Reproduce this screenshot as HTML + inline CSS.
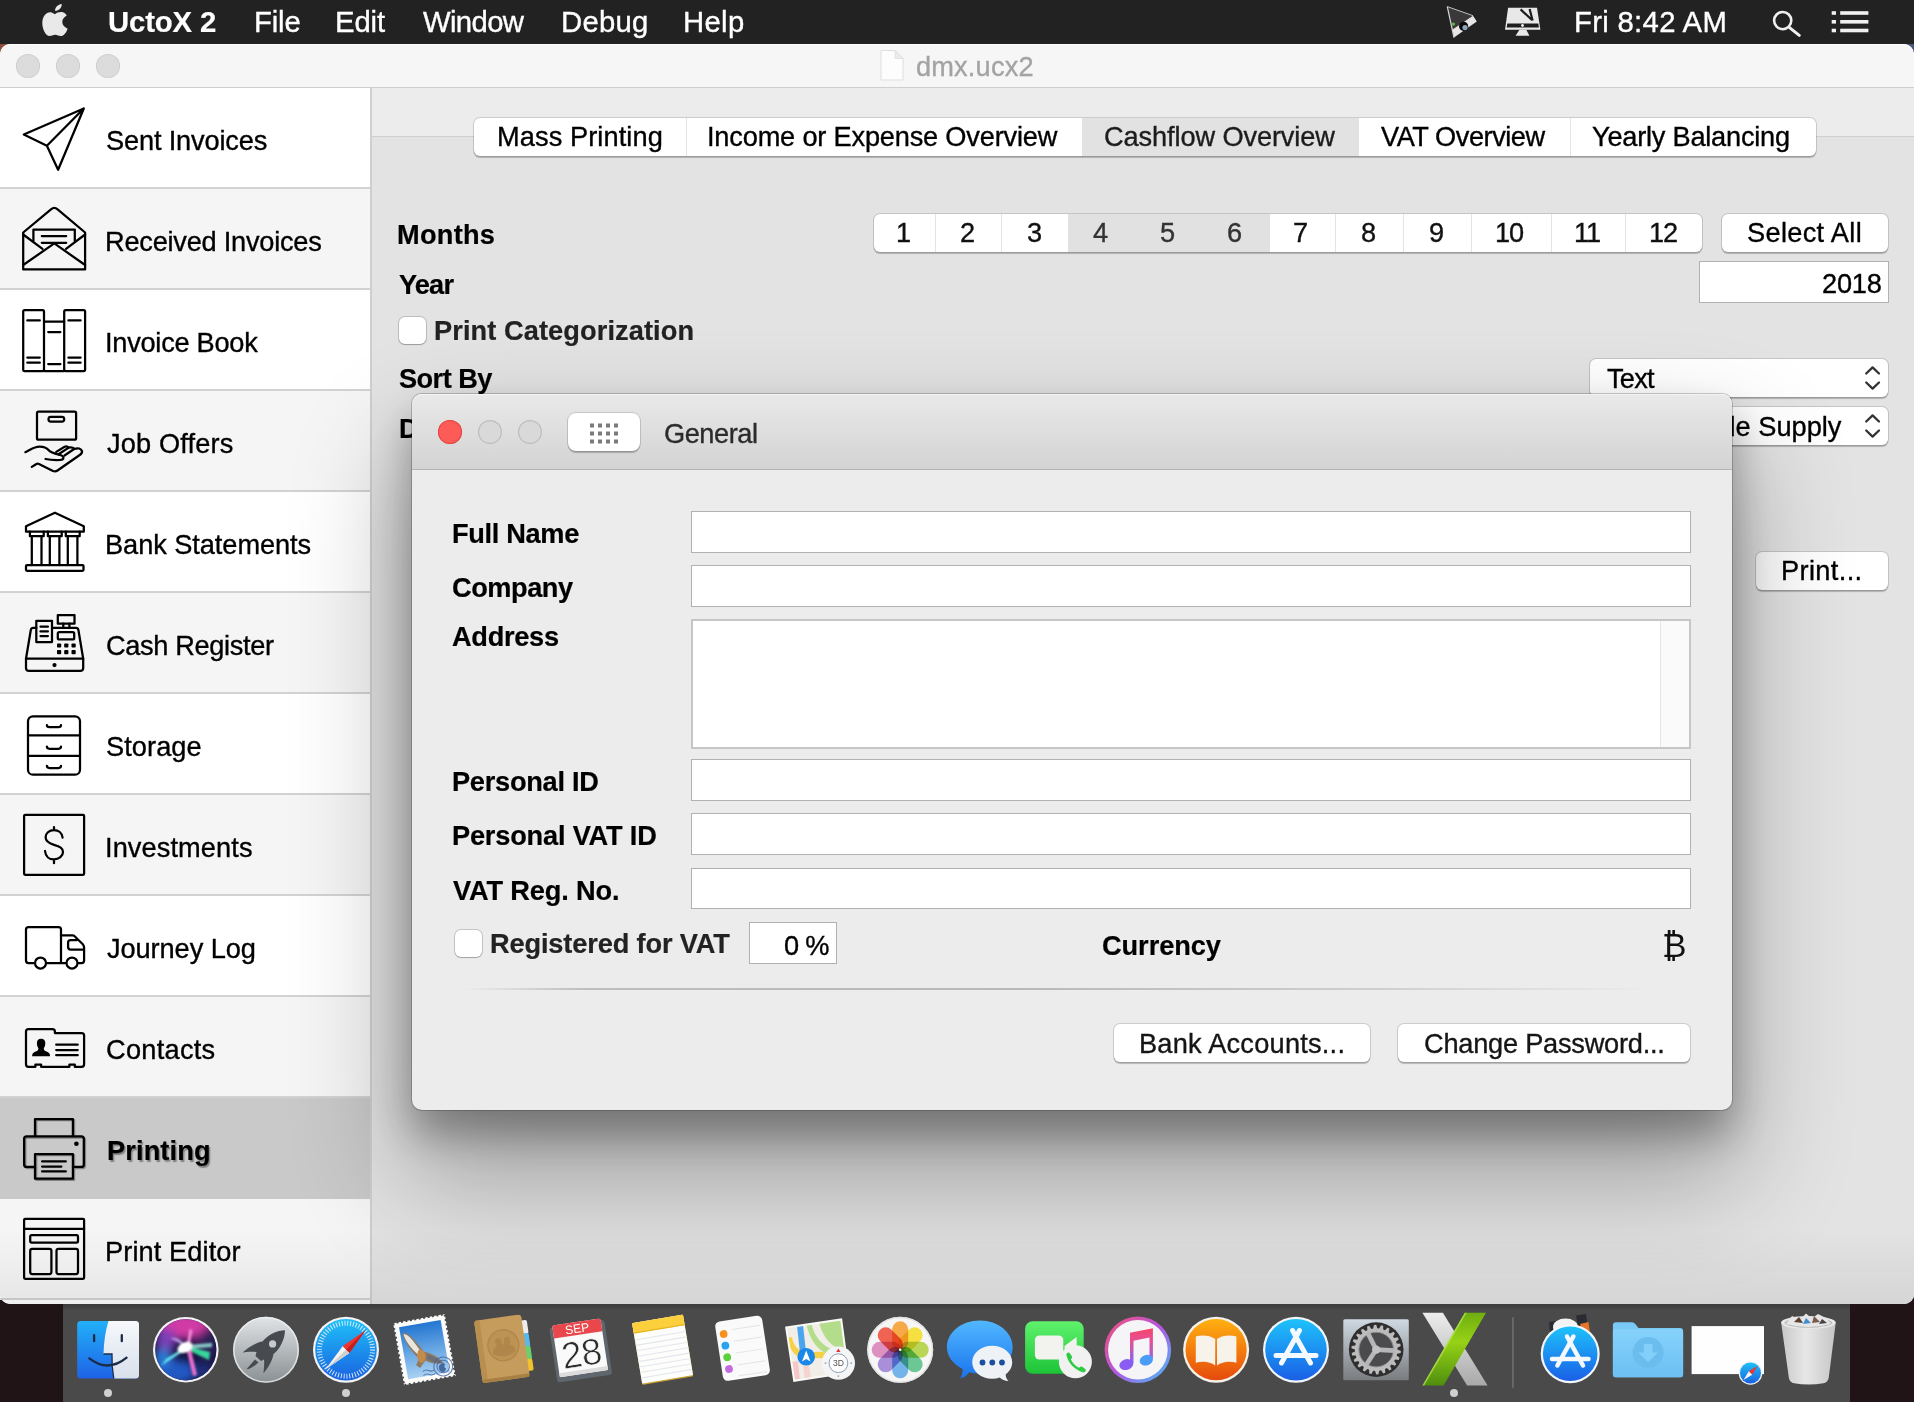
<!DOCTYPE html>
<html lang="en"><head><meta charset="utf-8"><title>UctoX 2</title>
<style>
html,body{margin:0;padding:0}
body{width:1914px;height:1402px;position:relative;overflow:hidden;background:#201416;font-family:"Liberation Sans",sans-serif}
.t{position:absolute;white-space:nowrap;line-height:1;font-family:"Liberation Sans",sans-serif;will-change:transform}
.abs{position:absolute}
#menubar{position:absolute;left:0;top:0;width:1914px;height:44px;background:#222}
#win{position:absolute;left:0;top:44px;width:1914px;height:1260px;background:#ececec;border-radius:10px 10px 10px 10px;overflow:hidden}
#titlebar{position:absolute;left:0;top:0;width:1914px;height:43px;background:#f6f6f6;border-bottom:1px solid #cfcfcf;box-shadow:inset 0 1px 0 #fff;border-radius:10px 10px 0 0}
.tl{position:absolute;width:24px;height:24px;border-radius:50%;background:#dcdcdc;box-shadow:inset 0 0 0 1px #d0d0d0}
#sidebar{position:absolute;left:0;top:44px;width:370px;height:1216px;background:#fff;border-right:2px solid #cfcfcf}
.row{position:absolute;left:0;width:370px;height:99px;border-bottom:2px solid #d2d2d2}
.row.alt{background:#f5f5f5}
.row.sel{background:#c9c9c9;border-bottom-color:#c9c9c9}
.row svg{position:absolute;left:0;top:0;width:100px;height:101px;overflow:visible}
.ic{fill:none;stroke:#000;stroke-width:2.250;stroke-linecap:round;stroke-linejoin:round}
#main{position:absolute;left:372px;top:44px;width:1542px;height:1216px;background:#ececec}
#tabbox{position:absolute;left:0;top:47.500px;width:1542px;height:1170px;background:#e3e3e3;border-top:1.500px solid #cfcfcf}
.seg{position:absolute;background:#fff;border-radius:6px;box-shadow:0 0 0 1px rgba(0,0,0,.13),0 1.5px 1px rgba(0,0,0,.22);overflow:hidden}
.seg i{position:absolute;top:0;bottom:0;width:1px;background:#e4e4e4}
.seg b{position:absolute;top:0;bottom:0;background:#e2e2e2}
.btn{position:absolute;background:#fff;border-radius:6px;box-shadow:0 0 0 1px rgba(0,0,0,.13),0 1.5px 1px rgba(0,0,0,.22)}
.field{position:absolute;background:#fff;box-shadow:inset 0 0 0 1px #b1b1b1}
.field.ta{box-shadow:inset 0 0 0 2px #c6c6c6}
.cb{position:absolute;width:27px;height:27px;border-radius:6px;background:#fff;box-shadow:0 0 0 1px rgba(0,0,0,.16),0 1px 1px rgba(0,0,0,.18)}
#dlg{position:absolute;left:412px;top:394px;width:1320px;height:716px;border-radius:10px;background:#ececec;box-shadow:0 0 0 1px rgba(0,0,0,.2),0 24px 40px 0 rgba(0,0,0,.30),0 60px 110px 10px rgba(0,0,0,.30)}
#dlgtitle{position:absolute;left:0;top:0;width:1320px;height:75px;border-radius:10px 10px 0 0;background:linear-gradient(#e9e9e9,#d3d3d3);border-bottom:1px solid #b4b4b4;box-shadow:inset 0 1px 0 #f4f4f4}
#dock{position:absolute;left:63px;top:1304px;width:1787px;height:98px;background:linear-gradient(#3b3b3b,#4a4a4a 7px)}
.dot{position:absolute;top:1389px;width:8px;height:8px;border-radius:50%;background:#d0d0d0}
</style>

</head><body>
<div class="abs" style="left:0;top:44px;width:14px;height:14px;background:#8e4a3c"></div><div class="abs" style="left:1900px;top:44px;width:14px;height:14px;background:#46557c"></div>
<div id="win"><div id="titlebar"></div>
<div class="tl" style="left:16px;top:10px"></div><div class="tl" style="left:56px;top:10px"></div><div class="tl" style="left:96px;top:10px"></div>
<svg class="abs" style="left:878px;top:4px" width="28" height="34" viewBox="878 48 28 34"><path d="M881,50.500 H895 L903,58.500 V80 H881 Z" fill="#fdfdfd" stroke="#dedede" stroke-width="1"/><path d="M895,50.500 V58.500 H903 Z" fill="#ececec" stroke="#dedede" stroke-width=".8"/></svg>
<div id="main"><div id="tabbox"></div></div>
<div id="sidebar"></div>
</div>
<div class="row" style="top:88px"><svg viewBox="0 0 100 101"><path class="ic" stroke-linejoin="miter" d="M23.8,46.5 L83.8,20.5 L58.1,81.8 L46.9,57.7 Z M46.9,57.7 L83.8,20.5"/></svg></div>
<div class="row alt" style="top:189px"><svg viewBox="0 0 100 101"><path class="ic" d="M23.2,80.4 V43.5 L51,20.3 Q54.3,17.6 57.6,20.3 L85.1,43.5 V80.4 Z"/>
<path class="ic" d="M23.2,76 L54.3,54.4 L85.1,76"/>
<path class="ic" d="M23.2,45.5 L42.5,59.8 M85.1,45.5 L66,59.8"/>
<path class="ic" d="M33.4,52 V40.6 H74.8 V52"/>
<path class="ic" d="M41.8,47 H66.2 M41.8,53.8 H66.2"/></svg></div>
<div class="row" style="top:290px"><svg viewBox="0 0 100 101"><rect class="ic" x="23.2" y="20.1" width="20.8" height="61" rx="1.5"/>
<rect class="ic" x="64.2" y="20.1" width="20.9" height="61" rx="1.5"/>
<path class="ic" d="M44,31.6 H64.2 M44,81.1 H64.2"/>
<path class="ic" d="M27.3,30.4 H39.8 M27.3,67.6 H39.8 M27.3,72.7 H39.8 M68.4,30.4 H80.6 M68.4,67.6 H80.6 M68.4,72.7 H80.6 M48.2,42 H60.4 M48.2,74 H60.4"/></svg></div>
<div class="row alt" style="top:391px"><svg viewBox="0 0 100 101"><rect class="ic" x="37" y="20.7" width="39.1" height="28" rx="1.5"/>
<rect class="ic" x="48.5" y="25.9" width="15.7" height="4.6" rx="2.3"/>
<path class="ic" d="M25.4,61.2 C31,58.5 34,55.7 39.5,55.6 C44,55.6 46.5,56.5 48.5,59 C51,62 56,63 60,64 C64.5,65 64.6,68.9 60,69 C54,69.2 50,69 45.6,68"/>
<path class="ic" d="M56.2,60.9 L64.6,55.8 Q67,54.8 68.8,56.6 L58.5,63.2 M68.8,56.6 Q72,55.6 74.5,57.8 L64.5,64.5 M74.5,58 C78,56.5 81,57.5 82,60 C82.5,62 81,63.3 79,64.5 L57.5,79.5 Q55.5,81 53,80 L39,73 Q37.5,72.3 36,73.2 L31.8,75.9"/></svg></div>
<div class="row" style="top:492px"><svg viewBox="0 0 100 101"><path class="ic" d="M54.9,20.7 L83.8,34.2 V39.7 H26 V34.2 Z"/>
<path class="ic" d="M29.9,39.7 V44.2 H43.7 V39.7 M47.9,39.7 V44.2 H61.7 V39.7 M65.8,39.7 V44.2 H79.7 V39.7"/>
<path class="ic" d="M31.8,44.2 V73 M41.5,44.2 V73 M49.8,44.2 V73 M59.4,44.2 V73 M67.8,44.2 V73 M77.4,44.2 V73"/>
<rect class="ic" x="26" y="73" width="57.5" height="5.8" rx="1"/></svg></div>
<div class="row alt" style="top:593px"><svg viewBox="0 0 100 101"><path class="ic" d="M36.3,34.9 H33.2 Q31.2,34.9 30.8,37 L26,65.7 V74.9 Q26,77.9 29,77.9 H80.2 Q83.2,77.9 83.2,74.9 V65.7 L78.4,37 Q78,34.9 76,34.9 H52"/>
<path class="ic" d="M26,65.7 H83.2"/>
<rect class="ic" x="36.3" y="27.8" width="15.7" height="21.2"/>
<path class="ic" d="M40.5,33.7 H47.9 M40.5,38.4 H47.9 M40.5,43 H47.9"/>
<rect class="ic" x="57.8" y="22" width="16.7" height="8.7"/>
<path class="ic" d="M63.3,30.7 V34.9 M69.4,30.7 V34.9"/>
<rect class="ic" x="57.8" y="39" width="16.4" height="7.4" rx="1.5"/>
<g fill="#000"><rect x="57" y="50.4" width="4.2" height="4.2" rx=".8"/><rect x="64.2" y="50.4" width="4.2" height="4.2" rx=".8"/><rect x="71.5" y="50.4" width="4.2" height="4.2" rx=".8"/><rect x="57" y="57.1" width="4.2" height="4.2" rx=".8"/><rect x="64.2" y="57.1" width="4.2" height="4.2" rx=".8"/><rect x="71.5" y="57.1" width="4.2" height="4.2" rx=".8"/><circle cx="54.5" cy="72.1" r="2.1"/></g></svg></div>
<div class="row" style="top:694px"><svg viewBox="0 0 100 101"><rect class="ic" x="28" y="22.3" width="52" height="58.4" rx="5"/>
<path class="ic" d="M28,41.3 H80 M28,61.8 H80"/>
<path class="ic" d="M46.9,31 Q46.9,33.2 49.5,33.2 H58.4 Q61,33.2 61,31 M46.9,52.6 Q46.9,54.8 49.5,54.8 H58.4 Q61,54.8 61,52.6 M46.9,71.8 Q46.9,74 49.5,74 H58.4 Q61,74 61,71.8"/></svg></div>
<div class="row alt" style="top:795px"><svg viewBox="0 0 100 101"><rect class="ic" x="24.1" y="19.9" width="60" height="59.9" rx="1"/>
<path class="ic" d="M62.6,42.6 C62,38 58.5,35.2 54,35.2 C49,35.2 45.6,38.3 45.6,42.2 C45.6,46 48,48 54,49.8 C60,51.5 63,53 63,57 C63,61 59,64.4 54,64.4 C49,64.4 45.5,61 45,56 M54,32 V35.2 M54,64.4 V68.2"/></svg></div>
<div class="row" style="top:896px"><svg viewBox="0 0 100 101"><path class="ic" d="M34,67 H28.5 Q26,67 26,64.5 V33.5 Q26,31 28.5,31 H58.5 Q61,31 61,33.5 V67 M47,67 H65.5"/>
<path class="ic" d="M61,39.3 H72.5 Q74.3,39.3 75.4,41 L82.8,48.2 Q84.1,50 84.1,52 V64.5 Q84.1,67 81.6,67 H78.5"/>
<path class="ic" d="M83.6,53.5 H70.6 Q68.1,53.5 68.1,51 V46.7 Q68.1,44.2 70.6,44.2 H76.8"/>
<circle class="ic" cx="40.5" cy="67" r="5.5"/><circle class="ic" cx="72" cy="67" r="5.5"/></svg></div>
<div class="row alt" style="top:997px"><svg viewBox="0 0 100 101"><path class="ic" d="M26,34.5 Q26,32 28.5,32 H52.4 Q54.9,32 54.9,34.5 V36.1 H81.6 Q84.1,36.1 84.1,38.6 V67.3 Q84.1,69.8 81.6,69.8 H74.8 V67.6 H69.4 V69.8 H41.1 V67.6 H35.4 V69.8 H28.5 Q26,69.8 26,67.3 Z"/>
<path d="M41.1,41.8 C44,41.8 45.3,43.6 45.3,46 C45.3,48.5 44.6,50 43.8,51.2 C43.8,53 44.5,53.8 46.5,54.6 C49,55.6 50.1,57 50.1,59.2 H32.1 C32.1,57 33.2,55.6 35.7,54.6 C37.7,53.8 38.4,53 38.4,51.2 C37.6,50 36.9,48.5 36.9,46 C36.9,43.6 38.2,41.8 41.1,41.8 Z" fill="#000"/>
<path class="ic" d="M56.2,47.7 H77.7 M56.2,53 H77.7 M56.2,58.2 H77.7"/></svg></div>
<div class="row sel" style="top:1098px"><svg viewBox="0 0 100 101"><g transform="translate(1.2,1.2)" opacity=".35"><path class="ic" stroke="#555" d="M35,38.4 V21 H72.9 V38.4 M35,68.9 H26.6 Q24.1,68.9 24.1,66.4 V40.9 Q24.1,38.4 26.6,38.4 H81.3 Q83.8,38.4 83.8,40.9 V66.4 Q83.8,68.9 81.3,68.9 H72.9"/><rect class="ic" stroke="#555" x="35" y="56" width="37.9" height="24.7"/></g>
<path class="ic" d="M35,38.4 V21 H72.9 V38.4 M35,68.9 H26.6 Q24.1,68.9 24.1,66.4 V40.9 Q24.1,38.4 26.6,38.4 H81.3 Q83.8,38.4 83.8,40.9 V66.4 Q83.8,68.9 81.3,68.9 H72.9"/>
<rect class="ic" x="35" y="56" width="37.9" height="24.7"/>
<path class="ic" d="M42.1,63.4 H65.8 M42.1,68.6 H61.4 M42.1,73.4 H65.8"/>
<circle cx="76.4" cy="45.8" r="2.3" fill="#000"/></svg></div>
<div class="row alt" style="top:1199px"><svg viewBox="0 0 100 101"><rect class="ic" x="24.1" y="19.9" width="60" height="59.9" rx="1"/>
<path class="ic" d="M24.1,29.8 H84.1"/>
<rect class="ic" x="30.2" y="36" width="47.8" height="7.5" rx="1.5"/>
<rect class="ic" x="30.2" y="49.9" width="21.2" height="25.1" rx="2"/>
<rect class="ic" x="56.5" y="49.9" width="21.5" height="25.1" rx="2"/></svg></div>
<span class="t" style="left:106.0px;top:127.0px;font-size:27.2px;font-weight:400;color:#000;letter-spacing:-0.16px;-webkit-text-stroke:0.35px #000;">Sent Invoices</span>
<span class="t" style="left:105.0px;top:228.0px;font-size:27.2px;font-weight:400;color:#000;letter-spacing:-0.24px;-webkit-text-stroke:0.35px #000;">Received Invoices</span>
<span class="t" style="left:105.0px;top:329.0px;font-size:27.2px;font-weight:400;color:#000;letter-spacing:-0.26px;-webkit-text-stroke:0.35px #000;">Invoice Book</span>
<span class="t" style="left:107.0px;top:430.0px;font-size:27.2px;font-weight:400;color:#000;letter-spacing:0.16px;-webkit-text-stroke:0.35px #000;">Job Offers</span>
<span class="t" style="left:105.0px;top:531.0px;font-size:27.2px;font-weight:400;color:#000;letter-spacing:-0.06px;-webkit-text-stroke:0.35px #000;">Bank Statements</span>
<span class="t" style="left:106.0px;top:632.0px;font-size:27.2px;font-weight:400;color:#000;letter-spacing:-0.35px;-webkit-text-stroke:0.35px #000;">Cash Register</span>
<span class="t" style="left:106.0px;top:733.0px;font-size:27.2px;font-weight:400;color:#000;letter-spacing:0.07px;-webkit-text-stroke:0.35px #000;">Storage</span>
<span class="t" style="left:105.0px;top:834.0px;font-size:27.2px;font-weight:400;color:#000;letter-spacing:0.09px;-webkit-text-stroke:0.35px #000;">Investments</span>
<span class="t" style="left:107.0px;top:935.0px;font-size:27.2px;font-weight:400;color:#000;letter-spacing:-0.08px;-webkit-text-stroke:0.35px #000;">Journey Log</span>
<span class="t" style="left:106.0px;top:1036.0px;font-size:27.2px;font-weight:400;color:#000;letter-spacing:0.27px;-webkit-text-stroke:0.35px #000;">Contacts</span>
<span class="t" style="left:107.0px;top:1137.0px;font-size:27.2px;font-weight:700;color:#000;letter-spacing:0.12px;-webkit-text-stroke:0.2px #000;text-shadow:1.5px 1.5px 1px rgba(0,0,0,.35);">Printing</span>
<span class="t" style="left:105.0px;top:1238.0px;font-size:27.2px;font-weight:400;color:#000;letter-spacing:0.10px;-webkit-text-stroke:0.35px #000;">Print Editor</span>
<div class="abs" style="left:0;top:1230px;width:1914px;height:74px;background:linear-gradient(rgba(0,0,0,0),rgba(0,0,0,.06));border-radius:0 0 10px 10px"></div>
<div id="menubar"></div>
<svg class="abs" style="left:0;top:0" width="1914" height="44" viewBox="0 0 1914 44">
<!-- apple -->
<path d="M55,14.200 C57,12.300 61,11.500 63.500,12.600 C64.900,13.200 66,14.300 66.700,15.500 C63.700,17.300 62.300,19.500 62.300,21.800 C62.300,24.800 64.100,27.200 67.600,28.700 C66.400,32.200 63.800,36.100 60.800,36.100 C58.500,36.100 57.500,34.800 55.200,34.800 C52.800,34.800 51.600,36.100 49.600,36.100 C46,36.100 42.300,29.500 42.300,23 C42.300,16.500 46,12.300 50.200,12.300 C52.500,12.300 53.800,14.200 55,14.200 Z" fill="#e9e9e9"/>
<path d="M55,10.800 C54.800,7.500 58,4.200 61.700,3.900 C62.100,7.200 59,10.900 55,10.800 Z" fill="#e9e9e9"/>
<!-- projector arrow icon -->
<path d="M1447.300,6.600 L1473,15.700 L1452.500,29.500 Z" fill="#3a3838"/>
<path d="M1452.500,29.500 L1473,15.700 L1476.800,21.500 L1454,37.600 Z" fill="#e6e6e6"/>
<path d="M1447.300,6.600 L1473,15.700" stroke="#bdbdbd" stroke-width="1" fill="none"/>
<path d="M1447.300,6.600 L1454,37.600" stroke="#d8d8d8" stroke-width="1.200" fill="none"/>
<circle cx="1463.600" cy="26.300" r="4.600" fill="#0c0c0c"/>
<circle cx="1465" cy="27.600" r="2.600" fill="#8ea4b8"/>
<circle cx="1453.400" cy="24.100" r="1.700" fill="#5fb84a"/>
<!-- monitor icon -->
<path d="M1508.100,7.800 H1537 L1540.400,29.800 H1505 Z" fill="#e8e8e8"/>
<path d="M1507.300,23.500 H1538.300 L1538.900,27.600 H1506.700 Z" fill="#1e1e1e"/>
<circle cx="1522.500" cy="25.500" r="1.400" fill="#f0f0f0"/>
<path d="M1519.400,29.800 H1526.300 L1529.400,35.700 H1515.600 Z" fill="#e8e8e8"/>
<path d="M1520.600,9.400 L1532,20 M1529.600,9 L1532.600,20.500" stroke="#1c1c1c" stroke-width="2.200" fill="none"/>
<!-- search -->
<circle cx="1782.700" cy="20.600" r="8.600" fill="none" stroke="#f0f0f0" stroke-width="2.600"/>
<path d="M1789.200,27.400 L1799.300,35.400" stroke="#f0f0f0" stroke-width="3" stroke-linecap="round"/>
<!-- list -->
<g fill="#f0f0f0"><rect x="1831.700" y="11.200" width="4.300" height="3.600"/><rect x="1840.200" y="11.200" width="28.200" height="3.600"/><rect x="1831.700" y="20" width="4.300" height="3.600"/><rect x="1840.200" y="20" width="28.200" height="3.600"/><rect x="1831.700" y="28.700" width="4.300" height="3.600"/><rect x="1840.200" y="28.700" width="28.200" height="3.600"/></g>
</svg>

<!-- tabs -->
<div class="seg" style="left:474px;top:118px;width:1342px;height:38px"><b style="left:608px;width:277px"></b><i style="left:212px"></i><i style="left:1096px"></i></div>
<!-- months -->
<div class="seg" style="left:874px;top:214px;width:828px;height:38px"><b style="left:194px;width:202px;background:#e1e1e1"></b><i style="left:61px"></i><i style="left:127px"></i><i style="left:461px"></i><i style="left:529px"></i><i style="left:597px"></i><i style="left:677px"></i><i style="left:751px"></i></div>
<div class="btn" style="left:1722px;top:214px;width:166px;height:38px"></div>
<div class="field" style="left:1699px;top:261px;width:190px;height:42px"></div>
<div class="cb" style="left:398.500px;top:316.500px"></div>
<div class="btn" style="left:1590px;top:359px;width:298px;height:38px"></div>
<div class="btn" style="left:1590px;top:407px;width:298px;height:38px"></div>
<svg class="abs" style="left:1860px;top:360px" width="26" height="90" viewBox="1860 360 26 90"><g fill="none" stroke="#333" stroke-width="2.300" stroke-linecap="round" stroke-linejoin="round"><path d="M1866.200,373.500 L1872.600,367.400 L1879,373.500 M1866.200,382.500 L1872.600,388.600 L1879,382.500"/><path d="M1866.200,421.500 L1872.600,415.400 L1879,421.500 M1866.200,430.500 L1872.600,436.600 L1879,430.500"/></g></svg>
<div class="btn" style="left:1756px;top:552px;width:132px;height:38px"></div>

<span class="t" style="left:108.0px;top:7.0px;font-size:29.3px;font-weight:700;color:#fff;letter-spacing:-0.13px;-webkit-text-stroke:0.2px #fff;">UctoX 2</span>
<span class="t" style="left:254.0px;top:7.0px;font-size:29.3px;font-weight:400;color:#fff;letter-spacing:-0.14px;-webkit-text-stroke:0.35px #fff;">File</span>
<span class="t" style="left:335.0px;top:7.0px;font-size:29.3px;font-weight:400;color:#fff;letter-spacing:-0.11px;-webkit-text-stroke:0.35px #fff;">Edit</span>
<span class="t" style="left:423.0px;top:7.0px;font-size:29.3px;font-weight:400;color:#fff;letter-spacing:-0.65px;-webkit-text-stroke:0.35px #fff;">Window</span>
<span class="t" style="left:561.0px;top:7.0px;font-size:29.3px;font-weight:400;color:#fff;letter-spacing:0.24px;-webkit-text-stroke:0.35px #fff;">Debug</span>
<span class="t" style="left:683.0px;top:7.0px;font-size:29.3px;font-weight:400;color:#fff;letter-spacing:0.31px;-webkit-text-stroke:0.35px #fff;">Help</span>
<span class="t" style="left:1574.0px;top:7.0px;font-size:29.3px;font-weight:400;color:#fff;letter-spacing:0.30px;-webkit-text-stroke:0.35px #fff;">Fri 8:42 AM</span>
<span class="t" style="left:916.0px;top:52.5px;font-size:27.2px;font-weight:400;color:#a3a3a3;letter-spacing:0.17px;-webkit-text-stroke:0.35px #a3a3a3;">dmx.ucx2</span>
<span class="t" style="left:497.0px;top:123.0px;font-size:27.2px;font-weight:400;color:#000;letter-spacing:0.09px;-webkit-text-stroke:0.35px #000;">Mass Printing</span>
<span class="t" style="left:707.0px;top:123.0px;font-size:27.2px;font-weight:400;color:#000;letter-spacing:-0.19px;-webkit-text-stroke:0.35px #000;">Income or Expense Overview</span>
<span class="t" style="left:1104.0px;top:123.0px;font-size:27.2px;font-weight:400;color:#1c1c1c;letter-spacing:-0.11px;-webkit-text-stroke:0.35px #1c1c1c;">Cashflow Overview</span>
<span class="t" style="left:1381.0px;top:123.0px;font-size:27.2px;font-weight:400;color:#000;letter-spacing:-0.46px;-webkit-text-stroke:0.35px #000;">VAT Overview</span>
<span class="t" style="left:1592.0px;top:123.0px;font-size:27.2px;font-weight:400;color:#000;letter-spacing:-0.23px;-webkit-text-stroke:0.35px #000;">Yearly Balancing</span>
<span class="t" style="left:397.0px;top:221.0px;font-size:27.2px;font-weight:700;color:#000;letter-spacing:0.26px;-webkit-text-stroke:0.2px #000;">Months</span>
<span class="t" style="left:399.0px;top:271.0px;font-size:27.2px;font-weight:700;color:#000;letter-spacing:-0.82px;-webkit-text-stroke:0.2px #000;">Year</span>
<span class="t" style="left:434.0px;top:316.5px;font-size:27.2px;font-weight:700;color:#222;letter-spacing:0.09px;-webkit-text-stroke:0.2px #222;">Print Categorization</span>
<span class="t" style="left:399.0px;top:364.5px;font-size:27.2px;font-weight:700;color:#000;letter-spacing:-0.56px;-webkit-text-stroke:0.2px #000;">Sort By</span>
<span class="t" style="left:399.0px;top:414.5px;font-size:27.2px;font-weight:700;color:#000;letter-spacing:0.00px;-webkit-text-stroke:0.2px #000;">Date</span>
<span class="t" style="left:896.0px;top:219.0px;font-size:27.2px;font-weight:400;color:#111;letter-spacing:0.00px;-webkit-text-stroke:0.35px #111;">1</span>
<span class="t" style="left:960.0px;top:219.0px;font-size:27.2px;font-weight:400;color:#111;letter-spacing:0.00px;-webkit-text-stroke:0.35px #111;">2</span>
<span class="t" style="left:1027.0px;top:219.0px;font-size:27.2px;font-weight:400;color:#111;letter-spacing:0.00px;-webkit-text-stroke:0.35px #111;">3</span>
<span class="t" style="left:1093.0px;top:219.0px;font-size:27.2px;font-weight:400;color:#333;letter-spacing:0.00px;-webkit-text-stroke:0.35px #333;">4</span>
<span class="t" style="left:1160.0px;top:219.0px;font-size:27.2px;font-weight:400;color:#333;letter-spacing:0.00px;-webkit-text-stroke:0.35px #333;">5</span>
<span class="t" style="left:1227.0px;top:219.0px;font-size:27.2px;font-weight:400;color:#333;letter-spacing:0.00px;-webkit-text-stroke:0.35px #333;">6</span>
<span class="t" style="left:1293.0px;top:219.0px;font-size:27.2px;font-weight:400;color:#111;letter-spacing:0.00px;-webkit-text-stroke:0.35px #111;">7</span>
<span class="t" style="left:1361.0px;top:219.0px;font-size:27.2px;font-weight:400;color:#111;letter-spacing:0.00px;-webkit-text-stroke:0.35px #111;">8</span>
<span class="t" style="left:1429.0px;top:219.0px;font-size:27.2px;font-weight:400;color:#111;letter-spacing:0.00px;-webkit-text-stroke:0.35px #111;">9</span>
<span class="t" style="left:1495.0px;top:219.0px;font-size:27.2px;font-weight:400;color:#111;letter-spacing:-1.20px;-webkit-text-stroke:0.35px #111;">10</span>
<span class="t" style="left:1574.0px;top:219.0px;font-size:27.2px;font-weight:400;color:#111;letter-spacing:-1.20px;-webkit-text-stroke:0.35px #111;">11</span>
<span class="t" style="left:1649.0px;top:219.0px;font-size:27.2px;font-weight:400;color:#111;letter-spacing:-1.20px;-webkit-text-stroke:0.35px #111;">12</span>
<span class="t" style="left:1747.0px;top:219.0px;font-size:27.2px;font-weight:400;color:#000;letter-spacing:0.32px;-webkit-text-stroke:0.35px #000;">Select All</span>
<span class="t" style="left:1822.0px;top:270.0px;font-size:27.2px;font-weight:400;color:#000;letter-spacing:-0.19px;-webkit-text-stroke:0.35px #000;">2018</span>
<span class="t" style="left:1607.0px;top:364.5px;font-size:27.2px;font-weight:400;color:#000;letter-spacing:-0.77px;-webkit-text-stroke:0.35px #000;">Text</span>
<span class="t" style="left:1657.0px;top:413.0px;font-size:27.2px;font-weight:400;color:#000;letter-spacing:0.00px;-webkit-text-stroke:0.35px #000;">Taxable Supply</span>
<span class="t" style="left:1781.0px;top:557.0px;font-size:27.2px;font-weight:400;color:#000;letter-spacing:0.37px;-webkit-text-stroke:0.35px #000;">Print...</span>
<div id="dlg"><div id="dlgtitle"></div>
<div class="abs" style="left:26px;top:26px;width:24px;height:24px;border-radius:50%;background:#fc5b57;box-shadow:inset 0 0 0 1px #e2463f"></div>
<div class="abs" style="left:66px;top:26px;width:24px;height:24px;border-radius:50%;background:#d9d9d9;box-shadow:inset 0 0 0 1.2px #bdbdbd"></div>
<div class="abs" style="left:106px;top:26px;width:24px;height:24px;border-radius:50%;background:#d9d9d9;box-shadow:inset 0 0 0 1.2px #bdbdbd"></div>
<div class="btn" style="left:156px;top:19px;width:72px;height:38px;border-radius:8px"></div>
<svg class="abs" style="left:178px;top:29px" width="30" height="22" viewBox="0 0 30 22"><g fill="#7b7b7b"><rect x="0" y="0.500" width="4" height="4"/><rect x="8" y="0.500" width="4" height="4"/><rect x="16" y="0.500" width="4" height="4"/><rect x="24" y="0.500" width="4" height="4"/><rect x="0" y="8.500" width="4" height="4"/><rect x="8" y="8.500" width="4" height="4"/><rect x="16" y="8.500" width="4" height="4"/><rect x="24" y="8.500" width="4" height="4"/><rect x="0" y="16.500" width="4" height="4"/><rect x="8" y="16.500" width="4" height="4"/><rect x="16" y="16.500" width="4" height="4"/><rect x="24" y="16.500" width="4" height="4"/></g></svg>
<div class="field" style="left:279px;top:117px;width:1000px;height:42px"></div>
<div class="field" style="left:279px;top:171px;width:1000px;height:42px"></div>
<div class="field ta" style="left:279px;top:225px;width:1000px;height:130px"></div>
<div class="abs" style="left:1248px;top:227px;width:28px;height:126px;background:#fafafa;border-left:1px solid #e6e6e6"></div>
<div class="field" style="left:279px;top:365px;width:1000px;height:42px"></div>
<div class="field" style="left:279px;top:419px;width:1000px;height:42px"></div>
<div class="field" style="left:279px;top:473.500px;width:1000px;height:41px"></div>
<div class="cb" style="left:42.500px;top:535.500px"></div>
<div class="field" style="left:337px;top:528px;width:88px;height:42px"></div>
<div class="abs" style="left:52px;top:594px;width:1230px;height:2px;background:linear-gradient(90deg,rgba(0,0,0,0),rgba(0,0,0,.2) 10%,rgba(0,0,0,.22) 45%,rgba(0,0,0,.12) 75%,rgba(0,0,0,0) 97%)"></div>
<div class="btn" style="left:702px;top:630px;width:256px;height:38px"></div>
<div class="btn" style="left:986px;top:630px;width:292px;height:38px"></div>
<div style="position:absolute;left:-412px;top:-394px;width:0;height:0">

<span class="t" style="left:664.0px;top:420.0px;font-size:27.2px;font-weight:400;color:#2b2b2b;letter-spacing:-0.46px;-webkit-text-stroke:0.35px #2b2b2b;">General</span>
<span class="t" style="left:452.0px;top:519.5px;font-size:27.2px;font-weight:700;color:#000;letter-spacing:-0.33px;-webkit-text-stroke:0.2px #000;">Full Name</span>
<span class="t" style="left:452.0px;top:573.5px;font-size:27.2px;font-weight:700;color:#000;letter-spacing:-0.46px;-webkit-text-stroke:0.2px #000;">Company</span>
<span class="t" style="left:452.0px;top:623.0px;font-size:27.2px;font-weight:700;color:#000;letter-spacing:-0.29px;-webkit-text-stroke:0.2px #000;">Address</span>
<span class="t" style="left:452.0px;top:767.5px;font-size:27.2px;font-weight:700;color:#000;letter-spacing:-0.26px;-webkit-text-stroke:0.2px #000;">Personal ID</span>
<span class="t" style="left:452.0px;top:821.5px;font-size:27.2px;font-weight:700;color:#000;letter-spacing:-0.19px;-webkit-text-stroke:0.2px #000;">Personal VAT ID</span>
<span class="t" style="left:453.0px;top:876.5px;font-size:27.2px;font-weight:700;color:#000;letter-spacing:-0.15px;-webkit-text-stroke:0.2px #000;">VAT Reg. No.</span>
<span class="t" style="left:490.0px;top:930.0px;font-size:27.2px;font-weight:700;color:#222;letter-spacing:-0.14px;-webkit-text-stroke:0.2px #222;">Registered for VAT</span>
<span class="t" style="left:784.0px;top:932.0px;font-size:27.2px;font-weight:400;color:#000;letter-spacing:-0.69px;-webkit-text-stroke:0.35px #000;">0 %</span>
<span class="t" style="left:1102.0px;top:931.5px;font-size:27.2px;font-weight:700;color:#000;letter-spacing:-0.06px;-webkit-text-stroke:0.2px #000;">Currency</span>
<span class="t" style="left:1662.0px;top:928.5px;font-size:33px;font-weight:400;color:#111;letter-spacing:0.00px;-webkit-text-stroke:0.35px #111;-webkit-text-stroke:0;">₿</span>
<span class="t" style="left:1139.0px;top:1029.5px;font-size:27.2px;font-weight:400;color:#151515;letter-spacing:0.23px;-webkit-text-stroke:0.35px #151515;">Bank Accounts...</span>
<span class="t" style="left:1424.0px;top:1029.5px;font-size:27.2px;font-weight:400;color:#151515;letter-spacing:-0.23px;-webkit-text-stroke:0.35px #151515;">Change Password...</span>
</div></div>

<div id="dock"></div>
<div class="dot" style="left:104px"></div><div class="dot" style="left:342px"></div><div class="dot" style="left:1450.200px"></div>

<svg class="abs" style="left:0;top:1300px;will-change:transform" width="1914" height="102" viewBox="0 1300 1914 102">
<defs>
<linearGradient id="gFinderL" x1="0" y1="0" x2="0" y2="1"><stop offset="0" stop-color="#21b0f8"/><stop offset="1" stop-color="#1f62e6"/></linearGradient>
<linearGradient id="gFinderR" x1="0" y1="0" x2="0" y2="1"><stop offset="0" stop-color="#f6f8fb"/><stop offset="1" stop-color="#d8e0ec"/></linearGradient>
<radialGradient id="gSiri" cx=".5" cy=".5" r=".5"><stop offset="0" stop-color="#1b2a6e"/><stop offset=".7" stop-color="#141a4c"/><stop offset="1" stop-color="#0a0a2a"/></radialGradient>
<linearGradient id="gLaunch" x1="0" y1="0" x2="0" y2="1"><stop offset="0" stop-color="#e1e4e6"/><stop offset="1" stop-color="#8a9093"/></linearGradient>
<linearGradient id="gSafari" x1="0" y1="0" x2="0" y2="1"><stop offset="0" stop-color="#1ec0f8"/><stop offset="1" stop-color="#1a62e0"/></linearGradient>
<linearGradient id="gSky" x1="0" y1="0" x2="0" y2="1"><stop offset="0" stop-color="#2276d2"/><stop offset="1" stop-color="#a9d2f2"/></linearGradient>
<linearGradient id="gMsg" x1="0" y1="0" x2="0" y2="1"><stop offset="0" stop-color="#52b8ff"/><stop offset="1" stop-color="#1a74ee"/></linearGradient>
<linearGradient id="gFT" x1="0" y1="0" x2="0" y2="1"><stop offset="0" stop-color="#5ff26c"/><stop offset="1" stop-color="#1dc437"/></linearGradient>
<linearGradient id="gITring" x1="0" y1="0" x2="1" y2="1"><stop offset="0" stop-color="#f5506e"/><stop offset=".5" stop-color="#b556e2"/><stop offset="1" stop-color="#3cc4fa"/></linearGradient>
<linearGradient id="gNote" x1="0" y1="0" x2="0" y2="1"><stop offset="0" stop-color="#f7466a"/><stop offset=".4" stop-color="#e2509a"/><stop offset="1" stop-color="#7a6cf0"/></linearGradient>
<linearGradient id="gBooks" x1="0" y1="0" x2="0" y2="1"><stop offset="0" stop-color="#ffb010"/><stop offset="1" stop-color="#e64a0c"/></linearGradient>
<linearGradient id="gAS" x1="0" y1="0" x2="0" y2="1"><stop offset="0" stop-color="#1ec2fb"/><stop offset="1" stop-color="#1a5fe6"/></linearGradient>
<linearGradient id="gSP" x1="0" y1="0" x2="0" y2="1"><stop offset="0" stop-color="#cfd9e2"/><stop offset="1" stop-color="#797c7f"/></linearGradient>
<linearGradient id="gXg" x1="0" y1="0" x2="0" y2="1"><stop offset="0" stop-color="#ededed"/><stop offset="1" stop-color="#a9a9a9"/></linearGradient>
<linearGradient id="gXv" x1="0" y1="0" x2="0" y2="1"><stop offset="0" stop-color="#6fae10"/><stop offset=".4" stop-color="#96d216"/><stop offset="1" stop-color="#4f8f0e"/></linearGradient>
<linearGradient id="gFold" x1="0" y1="0" x2="0" y2="1"><stop offset="0" stop-color="#86d2fc"/><stop offset="1" stop-color="#6cbff2"/></linearGradient>
<linearGradient id="gTrash" x1="0" y1="0" x2="1" y2="0"><stop offset="0" stop-color="#d2d2d2"/><stop offset=".45" stop-color="#f3f3f3"/><stop offset="1" stop-color="#cfcfcf"/></linearGradient>
<clipPath id="cSiri"><circle cx="185.8" cy="1349.8" r="30.6"/></clipPath><filter id="fB4" x="-50%" y="-50%" width="200%" height="200%"><feGaussianBlur stdDeviation="4"/></filter><filter id="fB2" x="-50%" y="-50%" width="200%" height="200%"><feGaussianBlur stdDeviation="1.3"/></filter><filter id="fB1" x="-50%" y="-50%" width="200%" height="200%"><feGaussianBlur stdDeviation=".8"/></filter>
<clipPath id="cMaps"><path d="M786.2,1327.5 L841.2,1319.5 L848.3,1372.5 L794.2,1380.8 Z"/></clipPath>
</defs>
<!-- Finder -->
<rect x="77.2" y="1321" width="61.8" height="57.5" rx="3.5" fill="url(#gFinderL)"/>
<path d="M108.5,1321 H135.5 Q139,1321 139,1324.5 V1375 Q139,1378.5 135.5,1378.5 H113.8 Q111.5,1366 112,1354 H103.5 Q104,1335 108.5,1321 Z" fill="url(#gFinderR)"/>
<path d="M94.1,1335.2 V1341.2 M121.8,1335.2 V1341.2" stroke="#1c2b45" stroke-width="2.3" stroke-linecap="round"/>
<path d="M89.3,1358.4 Q108,1373 126.6,1357.7" fill="none" stroke="#1c2b45" stroke-width="2.3" stroke-linecap="round"/>
<path d="M103.5,1354 H112 Q111.5,1366 113.8,1378.5" fill="none" stroke="#1c2b45" stroke-width="1.300"/>
<!-- Siri -->
<circle cx="185.8" cy="1349.8" r="32.8" fill="#f4f2f6"/>
<circle cx="185.8" cy="1349.8" r="30.6" fill="#15123c"/>
<g clip-path="url(#cSiri)">
<g filter="url(#fB4)">
<ellipse cx="184" cy="1326" rx="27" ry="13" fill="#d23aa6"/>
<ellipse cx="166" cy="1340" rx="10" ry="12" fill="#7a3fb8"/>
<ellipse cx="175" cy="1372" rx="22" ry="12" fill="#2458c4"/>
<ellipse cx="163" cy="1358" rx="9" ry="10" fill="#2a7ad6"/>
<ellipse cx="207" cy="1345" rx="10" ry="16" fill="#2a2358"/>
<ellipse cx="203" cy="1372" rx="12" ry="9" fill="#1d2f78"/>
</g>
<g filter="url(#fB2)">
<path d="M184.4,1347.800 L161,1366 L166,1359 Z" fill="#5ff0f0"/>
<path d="M186,1346 L162.500,1364.500 L185,1350 Z" fill="#7ffcff"/>
<path d="M186,1346 L210,1352 L209,1360 L188,1350 Z" fill="#35d69a"/>
<path d="M186,1345 L212,1343 L212,1347 L187,1349 Z" fill="#9ff0e0" opacity=".8"/>
<path d="M186,1347 L193,1376 L197,1375 L190,1346 Z" fill="#f070d0"/>
<path d="M186,1349 L189.500,1329 L192.500,1330 L189,1349 Z" fill="#f78ad8"/>
<path d="M170,1338 Q180,1336 186,1347 Q178,1342 170,1338 Z" fill="#c9b6ff" opacity=".8"/>
<ellipse cx="185" cy="1347.500" rx="8" ry="5" fill="#fff" transform="rotate(-25 185 1347.500)"/>
</g>
<ellipse cx="184.800" cy="1347.600" rx="4" ry="3" fill="#fff" filter="url(#fB1)"/>
</g>
<!-- Launchpad -->
<circle cx="266" cy="1349.800" r="33" fill="url(#gLaunch)"/>
<circle cx="266" cy="1349.800" r="32.200" fill="none" stroke="#f2f4f5" stroke-opacity=".75" stroke-width="1.500"/>
<path d="M285,1330.200 C277,1330.500 268.500,1334 262.500,1341.500 C258,1342 250,1346 242.500,1352.500 C247,1351.500 253,1351.500 256.500,1352 L255.500,1356 L261,1361 L264,1359.500 C264.500,1363 264,1369 263.400,1373.300 C269,1367 272.500,1360 273.500,1354 C281,1348 284.800,1338 285,1330.200 Z" fill="#474b50"/>
<path d="M255,1359.500 L246.500,1369.300 C250,1369 254,1366.500 258.500,1362.500 Z" fill="#474b50"/>
<circle cx="272.600" cy="1343.900" r="3.600" fill="#c6cace"/>
<!-- Safari -->
<circle cx="346" cy="1349.7" r="33" fill="#f3f3f5"/>
<circle cx="346" cy="1349.7" r="30.8" fill="url(#gSafari)"/>
<circle cx="346" cy="1349.7" r="26.5" fill="none" stroke="#e8f4ff" stroke-width="5" stroke-dasharray="1 1.85" opacity=".9"/>
<path d="M365.6,1330.2 L342.6,1346.3 L349.4,1353.1 Z" fill="#f0352f"/>
<path d="M325.6,1369.3 L342.6,1346.3 L349.4,1353.1 Z" fill="#f4f4f4"/>
<path d="M365.6,1330.2 L349.4,1353.1 L346,1349.7 Z" fill="#c41f20"/>
<path d="M325.6,1369.3 L349.4,1353.1 L346,1349.7 Z" fill="#cfcfd2"/>
<!-- Mail -->
<g transform="rotate(-10 424.400 1349.600)">
<rect x="398.200" y="1318.100" width="52.400" height="63" fill="#fbfbf9"/>
<rect x="398.200" y="1318.100" width="52.400" height="63" fill="none" stroke="#4a4a4a" stroke-width="2.600" stroke-dasharray="1.900 2.600" stroke-dashoffset="1"/>
<rect x="399.500" y="1319.400" width="49.800" height="60.400" fill="#fbfbf9"/>
<rect x="403.300" y="1323.200" width="42.200" height="52.800" fill="url(#gSky)"/>
<path d="M405.500,1330 C409,1328.500 413,1333 416.500,1339 C419.500,1344 421.500,1348 423.500,1351.500 C430,1353.500 436.500,1358.500 441.500,1366.500 C435,1366.500 428.500,1364.500 423.500,1360.500 C421.500,1362.500 419.500,1364.500 417,1367 L413.500,1363.500 L417.500,1357.500 C411.500,1350 406.500,1340 405.500,1330 Z" fill="#8f7a62"/>
<path d="M406.500,1331 C409.500,1331 412.500,1335 415.500,1340.500 C417.500,1344.500 419,1347.500 420.500,1350.500 L417.500,1353.500 C412,1346.500 407.500,1339 406.500,1331 Z" fill="#e9e6e0"/>
<path d="M418,1349.500 C420.500,1348 423.500,1350 424.500,1353.500 C425.500,1357.500 422.500,1361.500 419.500,1362.500 C416.500,1361.500 415.500,1357.500 416.500,1353.500 Z" fill="#c48a4a"/>
<path d="M426,1354.500 C431.500,1357 436.500,1361 439.500,1365.500 C434.500,1365 429.500,1363 425.500,1359.500 Z" fill="#6d6f78"/>
<g fill="none" stroke="#3d5f9c" stroke-width="1.100" opacity=".75"><circle cx="440" cy="1369.500" r="9.500"/><circle cx="440" cy="1369.500" r="6.300"/><path d="M419,1371 q3,-2 6,0 t6,0 M419,1375 q3,-2 6,0 t6,0"/></g>
<path d="M437.500,1367 c1.500,-1.400 4,-1 4.800,.8 c-1.600,1 -1.600,3.200 .3,4 c-.8,2.200 -2.200,3.400 -3.400,3.400 c-1.500,0 -3.800,-2.200 -3.800,-4.800 c0,-1.700 .9,-3 2.100,-3.400 Z" fill="#35588f" opacity=".85"/>
</g>
<!-- Contacts -->
<g transform="rotate(-8 501.900 1348.800)">
<rect x="522" y="1323.500" width="8.500" height="14" rx="1.800" fill="#ececec"/>
<rect x="522" y="1336.500" width="8.500" height="14" rx="1.800" fill="#5cb8ea"/>
<rect x="522" y="1349.500" width="8.500" height="14" rx="1.800" fill="#6bcf6c"/>
<rect x="522" y="1362.500" width="8.500" height="12" rx="1.800" fill="#f2c12e"/>
<rect x="478.200" y="1317.300" width="47.400" height="63" rx="3" fill="#c69c5c"/>
<rect x="478.200" y="1317.300" width="5.500" height="63" rx="2.500" fill="#b98f50"/>
<rect x="478.200" y="1376.800" width="47.400" height="3.500" rx="1.700" fill="#a98043"/>
<circle cx="503.800" cy="1345.500" r="15.500" fill="#bd9253" stroke="#b0864a" stroke-width="1.300"/>
<path d="M492.500,1353 C492.500,1348.500 494.500,1346.500 497.500,1345.500 C495.500,1342.500 495.500,1337.500 499.300,1337.500 C502.200,1337.500 503,1340.500 502.300,1343.500 L503.800,1345 L505.300,1343.500 C504.600,1340.500 505.400,1337.500 508.300,1337.500 C512.100,1337.500 512.100,1342.500 510.100,1345.500 C513.100,1346.500 515.100,1348.500 515.100,1353 C508,1357.500 499.500,1357.500 492.500,1353 Z" fill="#b0864a"/>
</g>
<!-- Calendar -->
<g transform="rotate(-8.500 580.100 1347.800)">
<rect x="552.500" y="1323.500" width="55.500" height="55.500" rx="3" fill="#5f666e"/>
<rect x="555.700" y="1321.700" width="48.800" height="52.200" rx="2" fill="#fafafa"/>
<rect x="555.700" y="1369.900" width="48.800" height="4" fill="#dcdcdc"/>
<path d="M555.700,1323.700 Q555.700,1321.700 557.700,1321.700 H602.500 Q604.500,1321.700 604.500,1323.700 V1334.800 H555.700 Z" fill="#e9474b"/>
<text x="580.100" y="1332.600" font-family="Liberation Sans, sans-serif" font-size="12.200" fill="#fff" text-anchor="middle">SEP</text>
<text x="580.600" y="1366.300" font-family="Liberation Sans, sans-serif" font-size="37" fill="#2c2c2c" stroke="#fafafa" stroke-width=".7" text-anchor="middle" letter-spacing="-.5">28</text>
</g>
<!-- Notes -->
<g transform="rotate(-9.500 662.600 1349.300)">
<rect x="636.800" y="1318.500" width="51.600" height="62.500" rx="1" fill="#c9a030"/>
<rect x="636.800" y="1318.500" width="51.600" height="61.300" rx="1" fill="#fdfdfb"/>
<rect x="636.800" y="1318.500" width="51.600" height="10.500" rx="1" fill="#fbd03c"/>
<rect x="636.800" y="1328" width="51.600" height="1.300" fill="#e8b624"/>
<path d="M636.800,1335.500 H688.400 M636.800,1341 H688.400 M636.800,1346.500 H688.400 M636.800,1352 H688.400 M636.800,1357.500 H688.400 M636.800,1363 H688.400 M636.800,1368.500 H688.400 M636.800,1374 H688.400" stroke="#e3e6ec" stroke-width="1.100"/>
</g>
<!-- Reminders -->
<g transform="rotate(-8.700 742.600 1348.300)">
<rect x="718.800" y="1318.200" width="47.500" height="60.100" rx="5" fill="#fafafa"/>
<path d="M735,1328 H763 M735,1340 H763 M735,1352 H763 M735,1364 H763 M735,1375 H763" stroke="#e4e4e6" stroke-width="1"/>
<circle cx="726" cy="1331.300" r="3.900" fill="#f8901c"/>
<circle cx="726" cy="1343" r="3.900" fill="#27a3f2"/>
<circle cx="726" cy="1354.800" r="3.900" fill="#5ad13a"/>
<circle cx="726" cy="1366.700" r="3.900" fill="#c66ae0"/>
</g>
<!-- Maps -->
<path d="M786.2,1327.5 L841.2,1319.5 L848.3,1372.5 L794.2,1380.8 Z" fill="#f1eee7"/>
<g clip-path="url(#cMaps)">
<path d="M818,1318 L846,1314 L850,1350 C836,1352 822,1340 818,1318 Z" fill="#b4dd8b"/>
<path d="M806,1322 C810,1345 824,1360 852,1358 L852,1352 C828,1354 814,1340 811,1321 Z" fill="#b4dd8b"/>
<path d="M787,1338 L792,1337 C794,1350 803,1354 815,1352 C822,1351 826,1352 830,1356 L827,1361 C822,1357 818,1358 812,1359 C800,1361 790,1354 787,1338 Z" fill="#f6d146"/>
<path d="M797,1326 L803,1325 L806,1352 L800,1353 Z" fill="#4ba4ee"/>
<path d="M790,1362 L798,1361 L800,1381 L793,1382 Z" fill="#f5c8c8"/>
<path d="M803,1366 L809,1365 L811,1379 L805,1380 Z" fill="#f5c8c8" opacity=".7"/>
</g>
<path d="M786.2,1327.5 L841.2,1319.5 L848.3,1372.5 L794.2,1380.8 Z" fill="none" stroke="#faf9f6" stroke-width="2"/>
<circle cx="806.2" cy="1356.800" r="8.800" fill="#1b87e6"/>
<path d="M806.200,1350.500 L810.500,1361.500 L806.200,1359 L802,1361.500 Z" fill="#fff"/>
<circle cx="838.400" cy="1363.200" r="16.600" fill="#f4f5f6"/>
<circle cx="838.400" cy="1363.200" r="9.400" fill="#fdfdfd" stroke="#8fa0b5" stroke-width="1"/><g fill="#9aa3ad"><circle cx="825.500" cy="1363.200" r=".9"/><circle cx="851.300" cy="1363.200" r=".9"/><circle cx="838.400" cy="1376.100" r=".9"/></g>
<path d="M836.200,1351.900 L838.400,1348.600 L840.600,1351.900 Z" fill="#e0353a"/>
<text x="838.400" y="1366.300" font-family="Liberation Sans, sans-serif" font-size="8.600" fill="#555" text-anchor="middle">3D</text>
<!-- Photos -->
<circle cx="900.200" cy="1349.800" r="33" fill="#f6f6f6"/>
<circle cx="900.200" cy="1349.800" r="32.300" fill="none" stroke="#e2e2e2" stroke-width="1.400"/>
<g transform="translate(900.200 1349.800)" style="isolation:isolate" opacity=".93"><rect x="-8" y="-28.500" width="16" height="29" rx="8" fill="#f6a53a" transform="rotate(0)" style="mix-blend-mode:multiply"/><rect x="-8" y="-28.500" width="16" height="29" rx="8" fill="#f4e034" transform="rotate(45)" style="mix-blend-mode:multiply"/><rect x="-8" y="-28.500" width="16" height="29" rx="8" fill="#b5d44c" transform="rotate(90)" style="mix-blend-mode:multiply"/><rect x="-8" y="-28.500" width="16" height="29" rx="8" fill="#62c48e" transform="rotate(135)" style="mix-blend-mode:multiply"/><rect x="-8" y="-28.500" width="16" height="29" rx="8" fill="#6cb0ea" transform="rotate(180)" style="mix-blend-mode:multiply"/><rect x="-8" y="-28.500" width="16" height="29" rx="8" fill="#a488d8" transform="rotate(225)" style="mix-blend-mode:multiply"/><rect x="-8" y="-28.500" width="16" height="29" rx="8" fill="#dc8abe" transform="rotate(270)" style="mix-blend-mode:multiply"/><rect x="-8" y="-28.500" width="16" height="29" rx="8" fill="#ee5846" transform="rotate(315)" style="mix-blend-mode:multiply"/></g>
<circle cx="900.200" cy="1349.800" r="1.300" fill="#fff"/>
<!-- Messages -->
<path d="M979.800,1320.400 C998,1320.400 1012.700,1332.300 1012.700,1347 C1012.700,1361.700 998,1373.600 979.800,1373.600 C976,1373.600 972.500,1373.100 969.200,1372.200 C967,1375.500 963.500,1378 960,1378.500 C962,1375.500 963,1372 962.500,1369 C953,1364.200 946.900,1356.200 946.900,1347 C946.900,1332.300 961.600,1320.400 979.800,1320.400 Z" fill="url(#gMsg)"/>
<path d="M992.200,1345.700 C1003.200,1345.700 1012.200,1353.100 1012.200,1362.200 C1012.200,1367 1009.700,1371.300 1005.700,1374.300 C1005.600,1376.800 1006.600,1379.300 1008.500,1381 C1005,1381 1001.800,1379.500 999.800,1377.500 C997.400,1378.300 994.900,1378.700 992.200,1378.700 C981.200,1378.700 972.200,1371.300 972.200,1362.200 C972.200,1353.100 981.200,1345.700 992.200,1345.700 Z" fill="#eef2f7"/>
<circle cx="982.500" cy="1362.500" r="2.900" fill="#1b4f9e"/><circle cx="992.300" cy="1362.500" r="2.900" fill="#1b4f9e"/><circle cx="1002" cy="1362.500" r="2.900" fill="#1b4f9e"/>
<!-- FaceTime -->
<rect x="1025.100" y="1321.300" width="58.600" height="52.400" rx="7.500" fill="url(#gFT)"/>
<rect x="1034.900" y="1335.500" width="28.400" height="24" rx="4.500" fill="#f2f2ef"/>
<path d="M1064.500,1346 L1076.600,1337 V1358 L1064.500,1349.500 Z" fill="#f2f2ef"/>
<circle cx="1075.400" cy="1361.800" r="16.500" fill="#f1f1f1"/>
<path d="M1066.500,1355.500 C1065.500,1353.500 1068.500,1351.500 1069.700,1353 L1072,1356.500 C1072.700,1357.700 1071.500,1358.500 1070.800,1359.300 C1072.500,1363 1075.500,1366 1079,1367.800 C1079.800,1367 1080.700,1366 1081.800,1366.600 L1085.300,1369 C1086.800,1370.300 1084.700,1373 1082.800,1372.300 C1075,1370 1068.500,1363.500 1066.500,1355.500 Z" fill="#2ecb45"/>
<!-- iTunes -->
<circle cx="1137.900" cy="1349.800" r="33.300" fill="url(#gITring)"/>
<circle cx="1137.900" cy="1349.800" r="29.800" fill="#f5f5f8"/>
<path d="M1130,1332.800 L1152.900,1328.200 V1358.500 H1149.500 V1337.500 L1133.500,1340.700 V1363.500 H1130 Z" fill="url(#gNote)"/>
<ellipse cx="1126.300" cy="1364.600" rx="7" ry="5.300" transform="rotate(-18 1126.300 1364.600)" fill="#8a5cf2"/>
<ellipse cx="1146.300" cy="1360.200" rx="6.800" ry="5.200" transform="rotate(-18 1146.300 1360.200)" fill="#4a9cf6"/>
<!-- iBooks -->
<circle cx="1216.100" cy="1349.700" r="33" fill="#f6f1ea"/>
<circle cx="1216.100" cy="1349.700" r="30.600" fill="url(#gBooks)"/>
<path d="M1215.200,1339 C1210,1335.500 1202.500,1334.800 1195.800,1336.500 V1362.800 C1203,1361 1210,1361.700 1215.200,1365.500 Z" fill="#f7f2ea"/>
<path d="M1217,1339 C1222.200,1335.500 1229.700,1334.800 1236.400,1336.500 V1362.800 C1229.200,1361 1222.200,1361.700 1217,1365.500 Z" fill="#f7f2ea"/>
<!-- App Store -->
<circle cx="1296" cy="1349.700" r="33" fill="#f3f6fa"/>
<circle cx="1296" cy="1349.700" r="30.800" fill="url(#gAS)"/>
<g stroke="#f4f8ff" stroke-width="5" stroke-linecap="round" fill="none"><path d="M1299.500,1330.500 L1281.500,1363"/><path d="M1292.500,1330.500 L1310.500,1363"/><path d="M1276,1355.500 H1316"/></g>
<!-- System Preferences -->
<rect x="1343.300" y="1319.300" width="65.500" height="60.900" rx="1.500" fill="url(#gSP)"/>
<circle cx="1376.2" cy="1349.6" r="27.300" fill="#2f2f30"/>
<path d="M1397.5,1349.6 L1401.0,1350.9 L1400.7,1353.1 L1397.1,1353.7 L1396.6,1355.6 L1399.6,1357.8 L1398.8,1359.9 L1395.1,1359.4 L1394.1,1361.1 L1396.3,1364.1 L1394.9,1365.8 L1391.6,1364.4 L1390.1,1365.7 L1391.5,1369.2 L1389.6,1370.5 L1386.8,1368.1 L1385.0,1369.0 L1385.3,1372.7 L1383.2,1373.4 L1381.1,1370.3 L1379.2,1370.7 L1378.5,1374.3 L1376.2,1374.4 L1375.1,1370.9 L1373.2,1370.7 L1371.4,1373.9 L1369.2,1373.4 L1369.2,1369.7 L1367.4,1369.0 L1364.8,1371.6 L1362.8,1370.5 L1363.8,1366.9 L1362.3,1365.7 L1359.0,1367.5 L1357.5,1365.8 L1359.4,1362.7 L1358.3,1361.1 L1354.7,1361.9 L1353.6,1359.9 L1356.4,1357.4 L1355.8,1355.6 L1352.1,1355.4 L1351.7,1353.1 L1355.0,1351.5 L1354.9,1349.6 L1351.4,1348.3 L1351.7,1346.1 L1355.3,1345.5 L1355.8,1343.6 L1352.8,1341.4 L1353.6,1339.3 L1357.3,1339.8 L1358.3,1338.1 L1356.1,1335.1 L1357.5,1333.4 L1360.8,1334.8 L1362.3,1333.5 L1360.9,1330.0 L1362.8,1328.7 L1365.6,1331.1 L1367.4,1330.2 L1367.1,1326.5 L1369.2,1325.8 L1371.3,1328.9 L1373.2,1328.5 L1373.9,1324.9 L1376.2,1324.8 L1377.3,1328.3 L1379.2,1328.5 L1381.0,1325.3 L1383.2,1325.8 L1383.2,1329.5 L1385.0,1330.2 L1387.6,1327.6 L1389.6,1328.7 L1388.6,1332.3 L1390.1,1333.5 L1393.4,1331.7 L1394.9,1333.4 L1393.0,1336.5 L1394.1,1338.1 L1397.7,1337.3 L1398.8,1339.3 L1396.0,1341.8 L1396.6,1343.6 L1400.3,1343.8 L1400.7,1346.1 L1397.4,1347.7 Z" fill="#bcbcbc"/>
<circle cx="1376.2" cy="1349.6" r="17.300" fill="#4b4b4d"/>
<circle cx="1376.2" cy="1349.6" r="17.300" fill="none" stroke="#8d8d8f" stroke-width="1"/>
<g stroke="#b6b6b8" stroke-width="4.600"><path d="M1376.2,1349.6 L1367.8,1333.1"/><path d="M1376.2,1349.6 L1394.7,1350.6"/><path d="M1376.2,1349.6 L1366.1,1365.1"/></g>
<circle cx="1376.2" cy="1349.6" r="4.200" fill="#c2c2c4"/>
<!-- X -->
<path d="M1422.400,1312.800 H1442.900 L1487.600,1385.500 H1467.100 Z" fill="url(#gXg)"/>
<path d="M1464.800,1312.800 H1486 L1443.600,1385.500 H1422.400 Z" fill="url(#gXv)"/>
<path d="M1464.800,1312.800 H1466.600 L1424.200,1385.500 H1422.400 Z" fill="#b8e85a" opacity=".7"/>
<!-- separator -->
<rect x="1512.100" y="1317.400" width="1.600" height="70.400" fill="#6e6e6e"/>
<!-- AppStore 2 -->
<path d="M1549,1322 L1556,1321 L1557,1331 L1550,1332 Z" fill="#2b2b33"/>
<ellipse cx="1565.500" cy="1327" rx="12.500" ry="8.500" fill="#f3f3f3"/>
<path d="M1576,1315.500 L1586,1314 L1588,1329 L1579,1331 Z" fill="#2b2b33"/>
<path d="M1580,1324 L1588.500,1322 L1590,1333 L1584,1335 Z" fill="#e8742a"/>
<circle cx="1570.200" cy="1353.700" r="29.500" fill="#f3f6fa"/>
<circle cx="1570.200" cy="1353.700" r="27.300" fill="url(#gAS)"/>
<g stroke="#f4f8ff" stroke-width="4.500" stroke-linecap="round" fill="none"><path d="M1573.400,1336.500 L1557.400,1365.500"/><path d="M1567,1336.500 L1583,1365.500"/><path d="M1552,1359 H1588.500"/></g>
<!-- Downloads -->
<path d="M1612.900,1325.200 Q1612.900,1322.200 1615.900,1322.200 H1632 Q1634,1322.200 1635.700,1324.500 L1638.500,1328.100 H1680.100 Q1683.100,1328.100 1683.100,1331.100 V1374.200 Q1683.100,1377.200 1680.100,1377.200 H1615.900 Q1612.900,1377.200 1612.900,1374.200 Z" fill="#79c9f7"/>
<rect x="1612.900" y="1329.300" width="70.200" height="47.900" rx="2.500" fill="url(#gFold)"/>
<circle cx="1648.100" cy="1352.600" r="15.500" fill="#6bbdee"/>
<path d="M1643.800,1344 H1652.400 V1352.500 H1658 L1648.100,1362 L1638.200,1352.500 H1643.800 Z" fill="#84cff9"/>
<!-- white window -->
<rect x="1691.600" y="1326.100" width="72.400" height="48" fill="#fefefe"/>
<circle cx="1750.500" cy="1373" r="11.800" fill="#eef1f5"/>
<circle cx="1750.500" cy="1373" r="10.500" fill="url(#gSafari)"/>
<path d="M1757.500,1366 L1748.800,1371.300 L1752.200,1374.700 Z" fill="#f0352f"/><path d="M1743.500,1380 L1748.800,1371.300 L1752.200,1374.700 Z" fill="#f4f4f4"/>
<!-- Trash -->
<path d="M1781.200,1323 L1788.900,1378 Q1789.500,1382 1794,1383.200 Q1808.400,1386 1823.500,1383.200 Q1828,1382 1828.700,1378 L1835.700,1323 Z" fill="url(#gTrash)" opacity=".93"/>
<ellipse cx="1808.400" cy="1322.600" rx="27.300" ry="6.500" fill="#e9e9e9"/>
<ellipse cx="1808.400" cy="1322.800" rx="24" ry="5" fill="#bdbdbd"/>
<path d="M1786,1324 L1792,1316 L1800,1319.500 L1806,1313.500 L1812,1318.500 L1818,1314 L1826,1318 L1831,1324 Q1808,1330 1786,1324 Z" fill="#e6e6e6"/>
<path d="M1794,1322 L1799,1317 L1803,1323 Z" fill="#5a4030"/><path d="M1806,1318 L1811,1323 L1803,1324 Z" fill="#3f8fd0"/><path d="M1814,1316 L1820,1322 L1812,1323 Z" fill="#7a5a48"/><path d="M1822,1319 L1827,1323 L1819,1324 Z" fill="#444"/>
</svg>

</body></html>
